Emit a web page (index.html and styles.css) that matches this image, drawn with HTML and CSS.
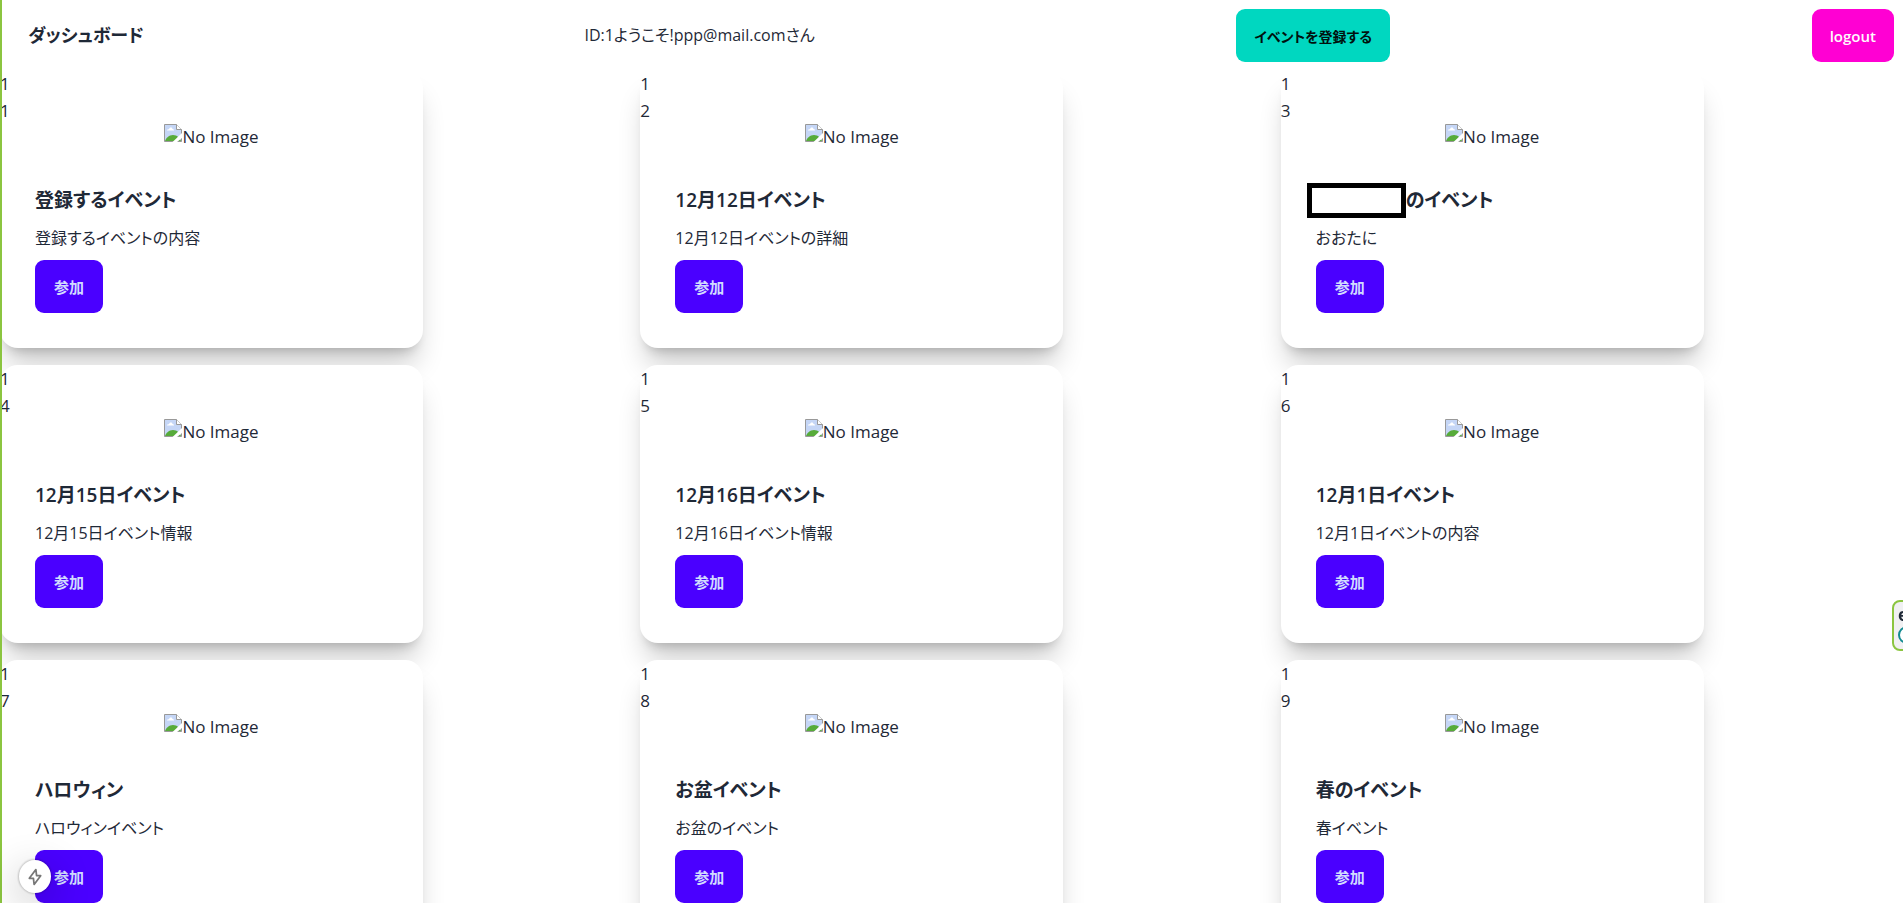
FILE: index.html
```html
<!DOCTYPE html>
<html lang="ja">
<head>
<meta charset="utf-8">
<title>ダッシュボード</title>
<link rel="stylesheet" href="styles.css">
</head>
<body>
<svg class="sprite" aria-hidden="true">
  <symbol id="broken" viewBox="0 0 18 18">
    <path d="M.5.5h12l5 5v12H.5z" fill="#c5d6f6" stroke="#999"/>
    <path d="M3 6.500c0-1 1-1.500 2-1.300C5.500 3 8 3 8.500 5c1 0 1.500.7 1.500 1.500z" fill="#fff"/>
    <path d="M1 17c1-3 4-6 8-6s7 3 8 6z" fill="#57ab3a"/>
    <path d="M12.500.5v5h5" fill="#fff" stroke="#999"/>
    <path d="M18 9 8.500 18H13l5-4z" fill="#fff"/>
  </symbol>
</svg>
<header class="navbar">
  <a class="brand" href="#">ダッシュボード</a>
  <p class="user">ID:1ようこそ!ppp@mail.comさん</p>
  <button class="btn btn-accent" type="button">イベントを登録する</button>
  <button class="btn btn-logout" type="button">logout</button>
</header>
<main class="grid">
  <article class="card"><div>1</div><div>1</div><div class="figure"><svg class="broken"><use href="#broken"/></svg>No Image</div><div class="card-body"><h2>登録するイベント</h2><p>登録するイベントの内容</p><button class="btn btn-join" type="button">参加</button></div></article>
  <article class="card"><div>1</div><div>2</div><div class="figure"><svg class="broken"><use href="#broken"/></svg>No Image</div><div class="card-body"><h2>12月12日イベント</h2><p>12月12日イベントの詳細</p><button class="btn btn-join" type="button">参加</button></div></article>
  <article class="card"><div>1</div><div>3</div><div class="figure"><svg class="broken"><use href="#broken"/></svg>No Image</div><div class="card-body"><h2><span class="mask"></span>のイベント</h2><p>おおたに</p><button class="btn btn-join" type="button">参加</button></div></article>
  <article class="card"><div>1</div><div>4</div><div class="figure"><svg class="broken"><use href="#broken"/></svg>No Image</div><div class="card-body"><h2>12月15日イベント</h2><p>12月15日イベント情報</p><button class="btn btn-join" type="button">参加</button></div></article>
  <article class="card"><div>1</div><div>5</div><div class="figure"><svg class="broken"><use href="#broken"/></svg>No Image</div><div class="card-body"><h2>12月16日イベント</h2><p>12月16日イベント情報</p><button class="btn btn-join" type="button">参加</button></div></article>
  <article class="card"><div>1</div><div>6</div><div class="figure"><svg class="broken"><use href="#broken"/></svg>No Image</div><div class="card-body"><h2>12月1日イベント</h2><p>12月1日イベントの内容</p><button class="btn btn-join" type="button">参加</button></div></article>
  <article class="card"><div>1</div><div>7</div><div class="figure"><svg class="broken"><use href="#broken"/></svg>No Image</div><div class="card-body"><h2>ハロウィン</h2><p>ハロウィンイベント</p><button class="btn btn-join" type="button">参加</button></div></article>
  <article class="card"><div>1</div><div>8</div><div class="figure"><svg class="broken"><use href="#broken"/></svg>No Image</div><div class="card-body"><h2>お盆イベント</h2><p>お盆のイベント</p><button class="btn btn-join" type="button">参加</button></div></article>
  <article class="card"><div>1</div><div>9</div><div class="figure"><svg class="broken"><use href="#broken"/></svg>No Image</div><div class="card-body"><h2>春のイベント</h2><p>春イベント</p><button class="btn btn-join" type="button">参加</button></div></article>
</main>
<div class="edge-line"></div>
<aside class="side-tab"><span class="tab-letter">e</span><svg class="tab-ring" viewBox="0 0 18 18"><circle cx="9" cy="9" r="8" fill="#fff" stroke="#128a91" stroke-width="2"/><path d="M8 5.500a4 4 0 0 0 0 7" fill="none" stroke="#128a91" stroke-width="2"/></svg></aside>
<div class="dev-badge">
  <svg viewBox="0 0 16 20"><path d="M9 1.500 1.500 11.500h4.700L7 18.500l7.500-10H9.800z" fill="none" stroke="#777" stroke-width="2" stroke-linejoin="round"/></svg>
</div>
</body>
</html>
```
FILE: styles.css
```css
* { box-sizing: border-box; }
body {
  margin: 0;
  background: #fff;
  color: #1f2937;
  font-family: "Open Sans", "Noto Sans CJK JP", sans-serif;
  font-size: 17px;
  line-height: 27px;
  font-feature-settings: "palt";
  overflow-x: hidden;
}
h2, p { margin: 0; }
.sprite { display: none; }

.navbar {
  display: flex;
  align-items: center;
  justify-content: space-between;
  padding: 9px 9px 8px;
}
.brand {
  padding: 0 19px;
  color: inherit;
  font-size: 18px;
  font-weight: 600;
  text-decoration: none;
}
.user { font-size: 16px; }
.btn {
  height: 53px;
  padding: 0 19px;
  border: 0;
  border-radius: 9px;
  font: 600 15px "Open Sans", "Noto Sans CJK JP", sans-serif;
  font-feature-settings: inherit;
  cursor: pointer;
}
.btn-accent { padding: 0 18px; background: #00d7c0; color: #00110e; font-size: 14px; }
.btn-logout { padding: 0 18px; background: #ff00d3; color: #fff8fd; }
.btn-join { background: #4a00ff; color: #d1dbff; }

.grid {
  display: grid;
  grid-template-columns: repeat(3, 1fr);
  gap: 17px 18px;
}
.card {
  width: 100%;
  max-width: 423px;
  border-radius: 18px;
  background: #fff;
  box-shadow: 0 22px 28px -6px rgba(0, 0, 0, 0.2), 0 9px 11px -7px rgba(0, 0, 0, 0.2);
}
.figure {
  display: flex;
  justify-content: center;
  height: 26px;
  line-height: 26px;
}
.broken { width: 18px; height: 18px; }
.card-body {
  display: flex;
  flex-direction: column;
  align-items: flex-start;
  gap: 9px;
  padding: 35px;
}
.card-body h2 {
  display: flex;
  font-size: 19px;
  line-height: 31px;
  font-weight: 600;
}
.card-body p { font-size: 16px; line-height: 26px; }
.mask {
  width: 99px;
  height: 35px;
  margin: -2px 0 -2px -9px;
  border: 5px solid #000;
  background: #fff;
}

.edge-line {
  position: fixed;
  inset: 0 auto 0 0;
  width: 2px;
  background: #8bc540;
}
.side-tab {
  position: fixed;
  top: 600px;
  right: -30px;
  width: 41px;
  height: 51px;
  padding: 2px 4px;
  border: 2px solid #8bc540;
  border-radius: 8px;
  background: #f0f0f2;
  overflow: hidden;
}
.tab-letter { display: block; font-weight: 700; line-height: 22px; }
.tab-ring { display: block; width: 18px; height: 18px; }
.dev-badge {
  position: fixed;
  left: 19px;
  bottom: 10px;
  display: grid;
  place-items: center;
  width: 32px;
  height: 33px;
  border-radius: 50%;
  background: #fff;
  box-shadow: 0 0 2px 1px rgba(0, 0, 0, 0.2), 0 11px 40px rgba(0, 0, 0, 0.3);
}
.dev-badge svg { width: 14px; height: 18px; }
```
